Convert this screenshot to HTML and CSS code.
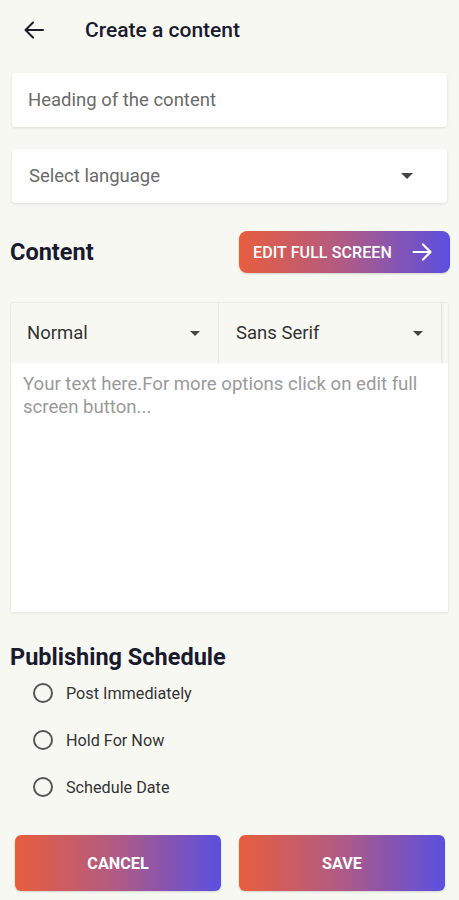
FILE: index.html
```html
<!DOCTYPE html>
<html>
<head>
<meta charset="utf-8">
<link rel="stylesheet" href="styles.css">
</head>
<body>
<div class="page">
  <header class="topbar">
    <svg class="back" width="20" height="18" viewBox="0 0 20 18"><path d="M19 9H2M9 1.5L1.5 9L9 16.5" fill="none" stroke="#1c1b2e" stroke-width="2" stroke-linecap="round" stroke-linejoin="round"/></svg>
    <h1 class="title">Create a content</h1>
  </header>

  <div class="field card">Heading of the content</div>
  <div class="field card select">
    <span>Select language</span>
    <span class="caret"></span>
  </div>

  <div class="section-row">
    <h2 class="section-title">Content</h2>
    <button class="grad-btn edit-btn">EDIT FULL SCREEN
      <svg width="20" height="18" viewBox="0 0 20 18"><path d="M1.5 9H18M11 1.5L18.5 9L11 16.5" fill="none" stroke="#fff" stroke-width="2.2" stroke-linecap="round" stroke-linejoin="round"/></svg>
    </button>
  </div>

  <div class="editor">
    <div class="toolbar">
      <div class="tool"><span>Normal</span><span class="caret small"></span></div>
      <div class="tool"><span>Sans Serif</span><span class="caret small"></span></div>
    </div>
    <div class="editor-body">Your text here.For more options click on edit full screen button...</div>
  </div>

  <h2 class="section-title sched">Publishing Schedule</h2>
  <div class="radios">
    <label class="radio"><span class="dot"></span>Post Immediately</label>
    <label class="radio"><span class="dot"></span>Hold For Now</label>
    <label class="radio"><span class="dot"></span>Schedule Date</label>
  </div>

  <div class="actions">
    <button class="grad-btn action">CANCEL</button>
    <button class="grad-btn action">SAVE</button>
  </div>
</div>
</body>
</html>
```
FILE: styles.css
```css
* { box-sizing: border-box; }
html, body { margin: 0; padding: 0; }
body {
  background: #f8f8f3;
  font-family: Roboto, "Liberation Sans", sans-serif;
  color: #1c1b2e;
  width: 459px;
  height: 900px;
  overflow: hidden;
}
.page { padding: 0 10px; }
.topbar {
  display: flex;
  align-items: center;
  height: 60px;
  padding-left: 14px;
}
.back { margin-right: 41px; }
.title {
  margin: 0;
  font-size: 21px;
  font-weight: 500;
  color: #1a1a2e;
}
.card {
  background: #fff;
  box-shadow: 0 1px 3px rgba(0,0,0,0.10), 0 0 1px rgba(0,0,0,0.06);
  border-radius: 3px;
}
.field {
  margin: 13px 2px 0 2px;
  height: 54px;
  display: flex;
  align-items: center;
  padding-left: 16px;
  font-size: 18.5px;
  color: #6a6a6a;
}
.field.select { margin-top: 22px; justify-content: space-between; padding-right: 34px; padding-left: 17px; }
.caret {
  width: 0; height: 0;
  border-left: 6px solid transparent;
  border-right: 6px solid transparent;
  border-top: 6px solid #444;
}
.caret.small {
  border-left-width: 5px; border-right-width: 5px; border-top-width: 5px;
}
.section-row {
  display: flex;
  justify-content: space-between;
  align-items: center;
  margin-top: 28px;
}
.section-title {
  margin: 0;
  font-size: 23.5px;
  font-weight: 700;
  color: #1a1a2e;
}
.grad-btn {
  border: none;
  color: #fff;
  font-family: Roboto, "Liberation Sans", sans-serif;
  font-weight: 500;
  background: linear-gradient(90deg, #e85e3e 0%, #b05a86 50%, #5a4fe0 100%);
  box-shadow: 0 1px 2px rgba(0,0,0,0.15);
}
.edit-btn {
  width: 211px;
  height: 42px;
  border-radius: 8px;
  display: flex;
  align-items: center;
  justify-content: space-between;
  padding: 0 18px 0 14px;
  font-size: 16px;
  letter-spacing: 0.1px;
  margin-right: -1px;
}
.editor {
  margin-top: 29px;
  height: 311px;
  border: 1px solid #ecece6;
  border-radius: 3px;
  display: flex;
  flex-direction: column;
  box-shadow: 0 1px 2px rgba(0,0,0,0.05);
}
.toolbar {
  display: flex;
  height: 60px;
  width: 431px;
  border-right: 1px solid #e6e6e0;
  box-shadow: 1px 1px 2px rgba(0,0,0,0.04);
}
.tool {
  display: flex;
  align-items: center;
  justify-content: space-between;
  font-size: 18.5px;
  color: #333;
}
.tool:first-child {
  width: 208px;
  padding: 0 18px 0 16px;
  border-right: 1px solid #e6e6e0;
}
.tool:last-child {
  flex: 1;
  padding: 0 18px 0 17px;
}
.editor-body {
  flex: 1;
  background: #fff;
  padding: 10px 12px;
  font-size: 18.6px;
  line-height: 23px;
  color: #9a9a9a;
}
.sched { margin-top: 30px; }
.radios {
  display: flex;
  flex-direction: column;
  gap: 27px;
  margin-top: 12px;
  padding-left: 23px;
}
.radio {
  display: flex;
  align-items: center;
  font-size: 16.2px;
  color: #333;
  height: 20px;
}
.dot {
  width: 20px; height: 20px;
  border: 2px solid #555;
  border-radius: 50%;
  margin-right: 13px;
}
.actions {
  display: flex;
  justify-content: space-between;
  margin-top: 38px;
  padding: 0 4px 0 5px;
}
.action {
  width: 206px;
  height: 56px;
  border-radius: 6px;
  font-size: 16.2px;
  font-weight: 700;
}
```
